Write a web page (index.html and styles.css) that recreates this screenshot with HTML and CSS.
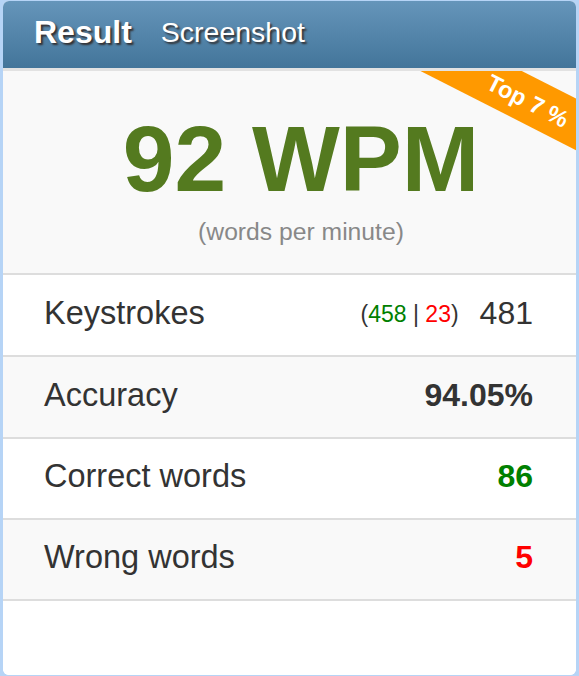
FILE: index.html
```html
<!DOCTYPE html>
<html>
<head>
<meta charset="utf-8">
<link rel="stylesheet" href="styles.css">
</head>
<body>
<div class="card">
  <div class="header">
    <span class="title">Result</span>
    <span class="subtitle">Screenshot</span>
  </div>
  <div class="hero">
    <div class="ribbon">Top 7 %</div>
    <div class="wpm">92 WPM</div>
    <div class="wpm-note">(words per minute)</div>
  </div>
  <div class="rows">
    <div class="row">
      <span class="label">Keystrokes</span>
      <span class="value"><span class="split">(<span class="good">458</span> | <span class="bad">23</span>)</span>481</span>
    </div>
    <div class="row alt">
      <span class="label">Accuracy</span>
      <span class="value strong">94.05%</span>
    </div>
    <div class="row">
      <span class="label">Correct words</span>
      <span class="value strong good">86</span>
    </div>
    <div class="row alt">
      <span class="label">Wrong words</span>
      <span class="value strong bad">5</span>
    </div>
  </div>
  <div class="footer"></div>
</div>
</body>
</html>
```

FILE: styles.css
```css
html, body {
  margin: 0;
  padding: 0;
}
body {
  background: #b6d4f6;
  padding: 1px 3px 1px 3px;
  font-family: "Liberation Sans", Arial, sans-serif;
  color: #333;
}
.card {
  background: #fff;
  border-radius: 6px;
  overflow: hidden;
  height: 674px;
  display: flex;
  flex-direction: column;
}
.header {
  background: linear-gradient(#6595ba, #43759a);
  border-bottom: 3px solid #e2e2e2;
  display: flex;
  align-items: center;
  padding-left: 31px;
  color: #fff;
  text-shadow: 2px 2px 2px rgba(40, 20, 10, 0.75);
  box-sizing: border-box;
  flex: none;
  height: 70px;
  padding-bottom: 4px;
}
.title {
  font-size: 32px;
  font-weight: bold;
}
.subtitle {
  font-size: 28.5px;
  margin-left: 29px;
}
.hero {
  position: relative;
  overflow: hidden;
  background: #f9f9f9;
  height: 202px;
  box-sizing: border-box;
  padding-left: 23px;
  padding-top: 36px;
  text-align: center;
  flex: none;
}
.ribbon {
  position: absolute;
  left: 395px;
  top: 7px;
  width: 264px;
  height: 46px;
  line-height: 48px;
  background: #ff9900;
  color: #fff;
  font-weight: bold;
  font-size: 23.5px;
  text-align: center;
  text-indent: -4px;
  transform: rotate(27deg);
}
.wpm {
  font-size: 93px;
  font-weight: bold;
  color: #547a1f;
  line-height: 104px;
}
.wpm-note {
  font-size: 24.7px;
  color: #888;
  margin-top: 7px;
}
.rows {
  flex: none;
}
.row {
  border-top: 2px solid #dddddd;
  display: flex;
  align-items: center;
  justify-content: space-between;
  padding: 0 43px 4px 41px;
  box-sizing: content-box;
  height: 76px;
  background: #fff;
}
.row.alt {
  background: #f9f9f9;
}
.row:nth-child(3), .row:nth-child(4) {
  height: 75px;
}
.label {
  font-size: 32.5px;
}
.value {
  font-size: 32px;
  display: flex;
  align-items: baseline;
}
.strong {
  font-weight: bold;
}
.split {
  font-size: 23px;
  margin-right: 21px;
  position: relative;
  top: -2px;
}
.good {
  color: #008000;
}
.bad {
  color: #ff0000;
}
.footer {
  border-top: 2px solid #dddddd;
  flex: 1;
  background: #fff;
}
```
